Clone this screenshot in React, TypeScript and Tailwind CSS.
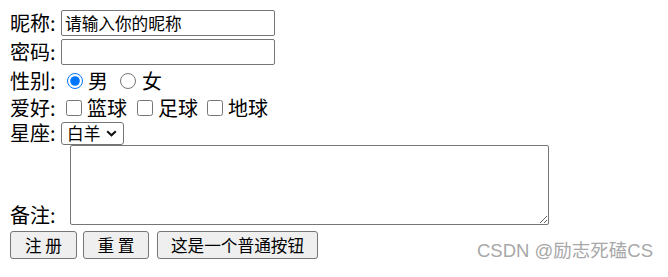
import { FC } from 'react';

const App: FC = () => {
  return (
    <div className="relative h-[277px] w-[668px] overflow-hidden bg-white pl-[10px] pt-[8px] font-['Noto_Sans_CJK_SC',sans-serif] text-black">
      {/* 昵称 */}
      <div className="flex h-[30px] items-center">
        <span className="w-[51px] text-[20px] leading-none">昵称:</span>
        <input
          readOnly
          value="请输入你的昵称"
          className="h-[26px] w-[214px] rounded-[2px] border border-[#767676] px-[3px] text-[16.67px] leading-none text-black outline-none"
        />
      </div>

      {/* 密码 */}
      <div className="flex h-[28px] items-center">
        <span className="w-[51px] text-[20px] leading-none">密码:</span>
        <input
          readOnly
          type="password"
          className="h-[26px] w-[214px] rounded-[2px] border border-[#767676] px-[3px] text-[16.67px] leading-none outline-none"
        />
      </div>

      {/* 性别 */}
      <div className="flex h-[29px] items-center">
        <span className="w-[51px] text-[20px] leading-none">性别:</span>
        <input type="radio" name="sex" defaultChecked className="m-0 ml-[6px] h-[16px] w-[16px]" />
        <span className="ml-[5px] text-[20px] leading-none">男</span>
        <input type="radio" name="sex" className="m-0 ml-[12px] h-[16px] w-[16px]" />
        <span className="ml-[6px] text-[20px] leading-none">女</span>
      </div>

      {/* 爱好 */}
      <div className="flex h-[26px] items-center">
        <span className="w-[51px] text-[20px] leading-none">爱好:</span>
        <input type="checkbox" className="m-0 ml-[5px] h-[16px] w-[16px]" />
        <span className="ml-[5px] text-[20px] leading-none">篮球</span>
        <input type="checkbox" className="m-0 ml-[10px] h-[16px] w-[16px]" />
        <span className="ml-[5px] text-[20px] leading-none">足球</span>
        <input type="checkbox" className="m-0 ml-[9px] h-[16px] w-[16px]" />
        <span className="ml-[5px] text-[20px] leading-none">地球</span>
      </div>

      {/* 星座 */}
      <div className="flex h-[24px] items-center">
        <span className="w-[51px] text-[20px] leading-none">星座:</span>
        <div className="flex h-[23px] w-[63px] items-center rounded-[3px] border border-[#767676] pl-[5px]">
          <span className="text-[16.67px] leading-none">白羊</span>
          <svg width="11" height="7" viewBox="0 0 11 7" className="ml-[6px] mt-[1px]">
            <path d="M1.2 1.2 L5.5 5.3 L9.8 1.2" fill="none" stroke="#111" strokeWidth="2" />
          </svg>
        </div>
      </div>

      {/* 备注 */}
      <div className="flex h-[80px] items-end">
        <span className="w-[60px] text-[20px] leading-none">备注:</span>
        <textarea
          readOnly
          className="h-[80px] w-[479px] resize rounded-[2px] border border-[#767676] outline-none"
        />
      </div>

      {/* 按钮 */}
      <div className="mt-[6px] flex">
        <button className="h-[28px] w-[67px] rounded-[3px] border border-[#767676] bg-[#efefef] text-[16.67px] leading-none">
          注 册
        </button>
        <button className="ml-[6px] h-[28px] w-[66px] rounded-[3px] border border-[#767676] bg-[#efefef] text-[16.67px] leading-none">
          重 置
        </button>
        <button className="ml-[8px] h-[28px] w-[161px] rounded-[3px] border border-[#767676] bg-[#efefef] text-[16.67px] leading-none">
          这是一个普通按钮
        </button>
      </div>

      {/* 水印 */}
      <div className="absolute left-[477px] top-[242px] font-['Liberation_Sans','Noto_Sans_CJK_SC',sans-serif] text-[18.5px] leading-none text-[#a8a8a8]">
        CSDN @励志死磕CS
      </div>
    </div>
  );
};

export default App;
